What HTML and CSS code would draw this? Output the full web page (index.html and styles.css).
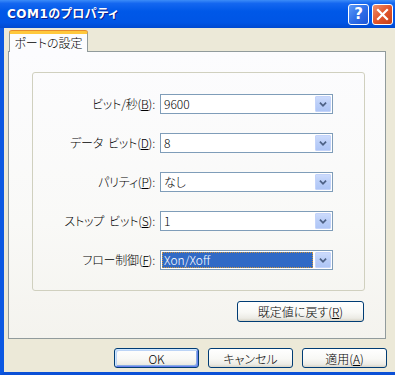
FILE: index.html
```html
<!DOCTYPE html>
<html lang="ja">
<head>
<meta charset="utf-8">
<title>COM1のプロパティ</title>
<link rel="stylesheet" href="styles.css">
</head>
<body>
<div class="window">
  <div class="titlebar">
    <span class="title">COM1のプロパティ</span>
    <div class="caption-btns">
      <span class="cap help">?</span>
      <span class="cap close"><svg width="13" height="13" viewBox="0 0 13 13"><path d="M2 2 L11 11 M11 2 L2 11" stroke="#fff" stroke-width="2.2" stroke-linecap="square"/></svg></span>
    </div>
  </div>
  <div class="client">
    <div class="tabs"><div class="tab">ポートの設定</div></div>
    <div class="panel">
      <div class="group">
        <div class="lbl">ビット/秒(<u>B</u>):</div>
        <div class="combo"><span class="val">9600</span><span class="drop"><svg width="16" height="16" viewBox="0 0 16 16"><path d="M4.5 6.5 L8 10 L11.5 6.5" fill="none" stroke="#4D6185" stroke-width="2"/></svg></span></div>
        <div class="lbl">データ<span class="sp"></span>ビット(<u>D</u>):</div>
        <div class="combo"><span class="val">8</span><span class="drop"><svg width="16" height="16" viewBox="0 0 16 16"><path d="M4.5 6.5 L8 10 L11.5 6.5" fill="none" stroke="#4D6185" stroke-width="2"/></svg></span></div>
        <div class="lbl">パリティ(<u>P</u>):</div>
        <div class="combo"><span class="val">なし</span><span class="drop"><svg width="16" height="16" viewBox="0 0 16 16"><path d="M4.5 6.5 L8 10 L11.5 6.5" fill="none" stroke="#4D6185" stroke-width="2"/></svg></span></div>
        <div class="lbl">ストップ<span class="sp"></span>ビット(<u>S</u>):</div>
        <div class="combo"><span class="val">1</span><span class="drop"><svg width="16" height="16" viewBox="0 0 16 16"><path d="M4.5 6.5 L8 10 L11.5 6.5" fill="none" stroke="#4D6185" stroke-width="2"/></svg></span></div>
        <div class="lbl">フロー制御(<u>F</u>):</div>
        <div class="combo"><span class="val sel">Xon/Xoff</span><span class="drop"><svg width="16" height="16" viewBox="0 0 16 16"><path d="M4.5 6.5 L8 10 L11.5 6.5" fill="none" stroke="#4D6185" stroke-width="2"/></svg></span></div>
      </div>
      <div class="reset-row"><button class="btn reset">既定値に戻す(<u>R</u>)</button></div>
    </div>
    <div class="actions">
      <button class="btn default">OK</button>
      <button class="btn">キャンセル</button>
      <button class="btn">適用(<u>A</u>)</button>
    </div>
  </div>
</div>
</body>
</html>
```
FILE: styles.css
```css
html, body {
  margin: 0;
  padding: 0;
  width: 395px;
  height: 375px;
  overflow: hidden;
  background: #ECE9D8;
}

.window {
  display: flex;
  flex-direction: column;
  width: 395px;
  height: 375px;
  font-family: "Noto Sans CJK JP", sans-serif;
  font-feature-settings: "palt";
  font-size: 12px;
  font-weight: 300;
  color: #000;
}

.titlebar {
  height: 28px;
  flex: none;
  display: flex;
  align-items: center;
  justify-content: space-between;
  padding: 0 2px 0 7px;
  background: linear-gradient(to bottom, #3C8CF8 0%, #1467F0 12%, #0058E8 40%, #0055E5 80%, #0049D0 100%);
  box-sizing: border-box;
}

.title {
  font-family: "DejaVu Sans", "Noto Sans CJK JP", sans-serif;
  font-weight: bold;
  font-size: 12px;
  color: #fff;
  letter-spacing: 0.5px;
  text-shadow: 1px 1px 0 #0A1C8C;
  line-height: 16px;
}

.caption-btns {
  display: flex;
  gap: 3px;
  align-self: flex-start;
  margin-top: 4px;
}

.cap {
  width: 21px;
  height: 21px;
  box-sizing: border-box;
  border: 1px solid #fff;
  border-radius: 3px;
  display: flex;
  align-items: center;
  justify-content: center;
}

.help {
  background: linear-gradient(135deg, #5C9BF8 0%, #2F6FE8 50%, #1C55D8 100%);
  color: #fff;
  font-family: "DejaVu Sans", sans-serif;
  font-weight: bold;
  font-size: 15px;
  line-height: 19px;
}

.close {
  background: linear-gradient(135deg, #F0916D 0%, #E2552C 50%, #C63F17 100%);
}

.client {
  flex: 1;
  display: flex;
  flex-direction: column;
  border-left: 4px solid #0B58E2;
  border-bottom: 3px solid #0B50D6;
  padding: 3px 9px 0 4px;
  background: #ECE9D8;
}

.tabs {
  height: 20px;
  display: flex;
  padding-left: 1px;
}

.tab {
  position: relative;
  z-index: 1;
  width: 79px;
  height: 21px;
  box-sizing: border-box;
  background: #FCFCFE;
  border: 1px solid #919B9C;
  border-bottom: none;
  border-top: 3px solid #FFC83C;
  border-radius: 3px 3px 0 0;
  box-shadow: 0 -1px 0 #E68B2C;
  text-align: center;
  line-height: 17px;
  font-size: 12px;
}

.panel {
  height: 288px;
  box-sizing: border-box;
  border: 1px solid #919B9C;
  background: linear-gradient(to bottom, #FCFCFE 0%, #F9F9F7 60%, #F4F3EE 100%);
  padding: 20px 20px 16px 23px;
  display: flex;
  flex-direction: column;
}

.group {
  height: 219px;
  box-sizing: border-box;
  border: 1px solid #D0D0BF;
  border-radius: 3px;
  padding: 21px 0 20px 0;
  display: grid;
  grid-template-columns: 122px 173px;
  grid-auto-rows: 20px;
  column-gap: 5px;
  row-gap: 19px;
}

.lbl {
  text-align: right;
  line-height: 20px;
  white-space: nowrap;
  letter-spacing: -0.2px;
}

.sp {
  display: inline-block;
  width: 5px;
}

u {
  text-decoration: underline;
  text-underline-offset: 1px;
}

.combo {
  display: flex;
  align-items: center;
  box-sizing: border-box;
  height: 20px;
  border: 1px solid #7F9DB9;
  background: #fff;
  padding: 1px;
}

.val {
  flex: 1;
  height: 16px;
  line-height: 16px;
  padding-left: 2px;
  margin-right: 2px;
  box-sizing: border-box;
}

.val.sel {
  background: #316AC5;
  color: #fff;
  outline: 1px dotted #CE953A;
  outline-offset: -1px;
}

.drop {
  width: 16px;
  height: 16px;
  box-sizing: border-box;
  background: linear-gradient(to bottom, #CCDBFC 0%, #BACEF8 50%, #AFC6F6 100%);
  border: 1px solid #C3D3FA;
  border-radius: 1px;
  display: flex;
  align-items: center;
  justify-content: center;
}

.drop svg {
  display: block;
}

.reset-row {
  display: flex;
  justify-content: flex-end;
  margin-top: 10px;
  padding-right: 1px;
}

.btn {
  font-family: "Noto Sans CJK JP", sans-serif;
  font-feature-settings: "palt";
  font-size: 12px;
  font-weight: 300;
  color: #000;
  height: 20px;
  box-sizing: border-box;
  border: 1px solid #003C74;
  border-radius: 3px;
  background: linear-gradient(to bottom, #FFFFFF 0%, #F8F8F5 55%, #ECEBE5 85%, #D8D4C8 100%);
  padding: 0;
  line-height: 17px;
  text-align: center;
  margin: 0;
}

.reset {
  width: 127px;
  height: 21px;
}

.actions {
  display: flex;
  justify-content: flex-end;
  gap: 9px;
  margin-top: 9px;
  margin-right: -1px;
}

.actions .btn {
  width: 85px;
}

.btn.default {
  box-shadow: inset 1px 1px 0 #CEE7FF, inset -1px -1px 0 #6982EE, inset 2px 2px 0 #BCD4F6, inset -2px -2px 0 #89ADE4;
}
```
